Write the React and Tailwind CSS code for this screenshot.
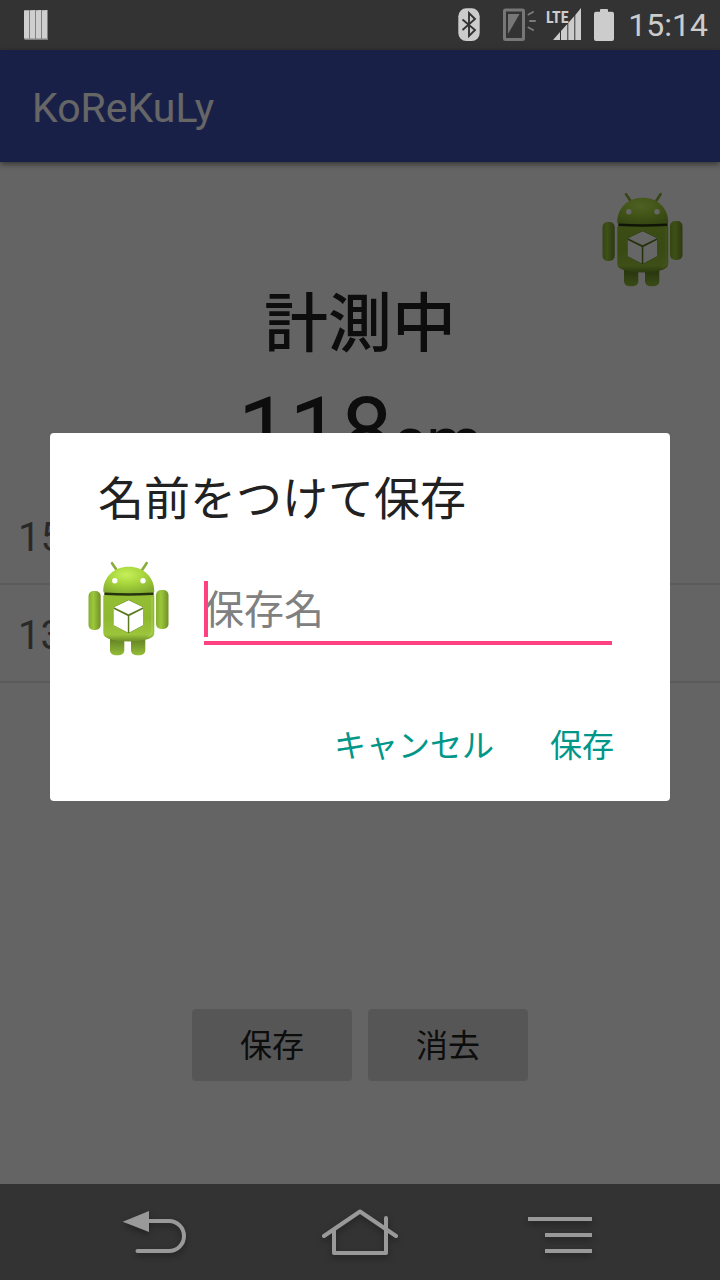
import React from "react";

const lengths = ["15", "13"];

function Robot() {
  return (
    <svg viewBox="0 0 96 96" className="size-24 shrink-0" aria-hidden="true">
      <defs>
        <radialGradient id="head" cx="0.45" cy="0.3" r="0.75">
          <stop offset="0" stopColor="#c6f05a" />
          <stop offset="0.45" stopColor="#a8d63c" />
          <stop offset="1" stopColor="#84ad30" />
        </radialGradient>
        <linearGradient id="body" x1="0" y1="0" x2="0" y2="1">
          <stop offset="0" stopColor="#94bf33" />
          <stop offset="0.5" stopColor="#8fb831" />
          <stop offset="0.85" stopColor="#9cc53c" />
          <stop offset="1" stopColor="#6d8f27" />
        </linearGradient>
        <linearGradient id="limb" x1="0" y1="0" x2="1" y2="0">
          <stop offset="0" stopColor="#86ad30" />
          <stop offset="0.4" stopColor="#9cc83a" />
          <stop offset="1" stopColor="#708f28" />
        </linearGradient>
        <linearGradient id="leg" x1="0" y1="0" x2="0" y2="1">
          <stop offset="0.3" stopColor="#5f7d23" />
          <stop offset="1" stopColor="#94bd38" />
        </linearGradient>
      </defs>
      <path d="M32 3.2 37 10.5M66.6 3.2 61.8 10.5" stroke="#89ac3c" strokeWidth="2.6" strokeLinecap="round" />
      <rect x="30" y="70" width="14.3" height="25.3" rx="5" fill="url(#leg)" />
      <rect x="51" y="70" width="14.3" height="25.3" rx="5" fill="url(#leg)" />
      <rect x="8.5" y="31" width="12.2" height="39" rx="5" fill="url(#limb)" />
      <rect x="76" y="30" width="12.5" height="39" rx="5" fill="url(#limb)" />
      <path d="M24.500 31h49l.3 6h-49.600z" fill="#26330f" />
      <path d="M23.3 31C23.3 17 34 6.7 48.7 6.7S74.3 17 74.3 31c0 1-.6 1.5-1.6 1.6q-24 1.200-48 0c-1-.1-1.4-.6-1.4-1.6z" fill="url(#head)" />
      <path d="M23.3 36.400q0-1.4 1.5-1.3 24 1.400 48 0 1.5-.1 1.5 1.3v36q0 4.500-6 6.500-8 2.500-19.500 2.500t-19.500-2.500q-6-2-6-6.500z" fill="url(#body)" />
      <path d="M72 37v35q-.5 3-4 4.500" fill="none" stroke="#b5dc66" strokeOpacity=".55" strokeWidth="1.200" />
      <circle cx="34.800" cy="20.700" r="2.700" fill="#fff" />
      <circle cx="63" cy="20.700" r="2.700" fill="#fff" />
      <path d="M48.700 39.800 34 47v18.500l14.500 7.800 14.500-7.800V47z" fill="#5b7a1e" />
      <path d="M48.700 40.300 63 47.200 48.500 54.300 34 47.200zM33.800 49l14 7v16.600l-14-7.300zM49.300 56l13.700-7v16.300l-13.700 7.300z" fill="#fff" />
    </svg>
  );
}

function StatusBar() {
  return (
    <header className="flex h-[50px] items-center bg-[#333333] pr-3 pl-6 text-[#cccccc]">
      <svg viewBox="0 0 24 30" className="h-[30px] w-6" aria-hidden="true">
        <path d="M.5 0H24v30H.5z" fill="#808080" />
        <path d="M0 .5h5v28H0zM6 .5l5-.5v28.500H6zM12 .5l5-.5v28.500h-5zM18 .5l5-.5v28.500h-5z" fill="#cfcfcf" />
      </svg>
      <div className="ml-auto flex items-center">
        <svg viewBox="0 0 22 34" className="h-[34px] w-[22px]" aria-hidden="true">
          <rect x=".3" y=".3" width="21.400" height="32.700" rx="8" fill="#cccccc" />
          <path d="M4.500 11.500 17 22l-6 6V5l6 6L4.500 22" fill="none" stroke="#333" strokeWidth="1.900" />
        </svg>
        <svg viewBox="0 0 36 34" className="ml-[22px] h-[34px] w-9" fill="none" stroke="#7b7b7b" aria-hidden="true">
          <rect x="2.500" y="2" width="19" height="29.500" rx="1" stroke="#777" strokeWidth="3" />
          <path d="M6 6h11.500L6 26z" fill="#777" stroke="none" />
          <path d="M26.500 6.500 31 4M28 13h5M26.500 19.500 31 22" strokeWidth="2" strokeLinecap="round" />
        </svg>
        <svg viewBox="0 0 36 34" className="ml-2 h-[34px] w-9" fill="#cccccc" aria-hidden="true">
          <path d="M7 32 14 24v8zM15 32v-9l6.300-7v16zM22.300 32V15l6-7v24zM29.300 32V7L35 0v32z" />
          <text x="0" y="15" fontSize="16" fontWeight="700" fontFamily="'Liberation Sans Narrow','Roboto Condensed',Roboto,sans-serif">LTE</text>
        </svg>
        <svg viewBox="0 0 20 34" className="ml-3 h-[34px] w-5" fill="#cccccc" aria-hidden="true">
          <rect x="6" y="1" width="8" height="6" rx="1" />
          <rect y="3.700" width="20" height="29.300" rx="2" />
        </svg>
        <time className="ml-[14px] text-[32px] leading-10">15:14</time>
      </div>
    </header>
  );
}

function NavButton({ label, children }) {
  return (
    <button type="button" aria-label={label} className="size-20">
      <svg viewBox="0 0 80 80" className="size-20 drop-shadow-[0_3px_3px_rgba(0,0,0,0.35)]" fill="none" stroke="#999999" strokeWidth="4" aria-hidden="true">
        {children}
      </svg>
    </button>
  );
}

function SaveDialog() {
  return (
    <div className="absolute inset-0 flex flex-col justify-center bg-black/60 px-[50px]">
      <section role="dialog" aria-labelledby="dialog-title" className="rounded bg-white pt-9 pb-5">
        <h2 id="dialog-title" className="px-12 text-[46px] leading-[60px] text-[#212121]">
          名前をつけて保存
        </h2>
        <div className="mt-[31px] flex items-center pr-[58px] pl-[30px]">
          <Robot />
          <div className="relative ml-7 flex min-w-0 flex-1">
            <input
              type="text"
              aria-label="保存名"
              placeholder="保存名"
              className="h-[74px] w-full border-b-4 border-[#ff4081] bg-transparent pt-2 text-[40px] text-[#212121] outline-none placeholder:text-[#808080] placeholder:opacity-100"
            />
            <span className="absolute top-[10px] left-0 h-14 w-1 bg-[#ff4081]" />
          </div>
        </div>
        <div className="mt-[53px] flex justify-end gap-6 pr-10 text-[32px] text-[#009688]">
          <button type="button" className="h-[72px] px-4 pt-0.5">キャンセル</button>
          <button type="button" className="h-[72px] px-4 pt-0.5">保存</button>
        </div>
      </section>
    </div>
  );
}

export default function App() {
  return (
    <div className="flex min-h-screen flex-col font-['Roboto','Noto_Sans_CJK_JP',sans-serif]">
      <StatusBar />
      <div className="relative flex flex-1 flex-col bg-[#fafafa]">
        <div className="flex h-28 items-center bg-[#3f51b5] px-8 pt-1 shadow-[0_2px_6px_rgba(0,0,0,0.5)]">
          <h1 className="text-[41px] leading-[48px] text-white">KoReKuLy</h1>
        </div>
        <main className="flex flex-1 flex-col pt-[29px]">
          <div className="flex justify-end pr-[30px]">
            <Robot />
          </div>
          <p className="mt-[6px] text-center text-[64px] leading-[64px] font-medium text-[#212121]">計測中</p>
          <p className="mt-[25px] text-center text-[92px] leading-[100px] text-[#212121]">
            118<span className="text-[64px] leading-none">cm</span>
          </p>
          <ul className="mt-[5px] text-[40px] text-[#666666]">
            {lengths.map((length) => (
              <li key={length} className="border-b-2 border-[#e1e1e1] px-[18px] pt-1.5 leading-[90px]">{length}</li>
            ))}
          </ul>
          <div className="mt-auto flex justify-center gap-4 pb-[103px] text-[32px] text-[#212121]">
            <button type="button" className="h-[72px] w-40 rounded bg-[#d7d7d7] pt-0.5">保存</button>
            <button type="button" className="h-[72px] w-40 rounded bg-[#d7d7d7] pt-0.5">消去</button>
          </div>
        </main>
        <SaveDialog />
      </div>
      <nav className="flex h-24 items-center justify-between bg-[#333333] px-[120px]">
        <NavButton label="戻る">
          <path d="M2.700 29.700 29 19v21z" fill="#999999" stroke="none" />
          <path d="M28 29h21a15 15 0 0 1 0 30H17.500" strokeLinecap="round" />
        </NavButton>
        <NavButton label="ホーム">
          <path d="M4 44 40 19.500 76 44" strokeLinecap="round" strokeLinejoin="round" />
          <path d="M14 38v23h52V26" strokeLinecap="round" strokeLinejoin="round" />
        </NavButton>
        <NavButton label="メニュー">
          <path d="M8 27h64M25 43h47M25 59h47" />
        </NavButton>
      </nav>
    </div>
  );
}
